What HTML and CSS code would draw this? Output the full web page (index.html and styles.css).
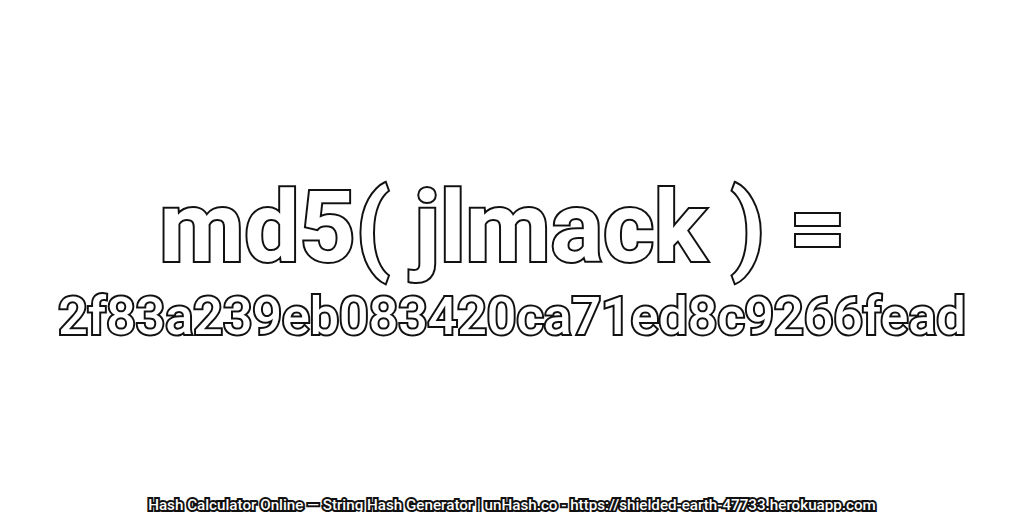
FILE: index.html
```html
<!DOCTYPE html>
<html lang="en">
<head>
    <meta charset="UTF-8">
    <title>md5( jlmack )</title>
    <link rel="stylesheet" href="styles.css">
</head>
<body>
    <div class="hash-card">
        <div class="hash-text">
            <h1 class="hash-title">md5( jlmack ) =</h1>
            <p class="hash-value">2f83a239eb083420ca71ed8c9266fead</p>
        </div>
        <p class="site-footer">Hash Calculator Online — String Hash Generator | unHash.co - https://shielded-earth-47733.herokuapp.com</p>
    </div>
</body>
</html>
```

FILE: styles.css
```css
body {
    margin: 0;
    background: #fff;
    font-family: Roboto, "Noto Sans", sans-serif;
}
.hash-card {
    width: 1024px;
    height: 512px;
    display: flex;
    flex-direction: column;
    align-items: center;
    overflow: hidden;
}
.hash-text {
    flex: 1;
    display: flex;
    flex-direction: column;
    align-items: center;
    justify-content: flex-end;
    padding-bottom: 150px;
}
.hash-title,
.hash-value,
.site-footer {
    margin: 0;
    color: #fff;
    font-weight: 500;
    white-space: nowrap;
    paint-order: stroke fill;
    -webkit-text-stroke: 4px #111;
}
.hash-title {
    margin-bottom: 10px;
    padding-right: 19px;
    font-size: 98px;
    font-weight: 700;
    line-height: 96px;
}
.hash-value {
    font-size: 52px;
    line-height: 62px;
}
.site-footer {
    font-size: 15.2px;
    line-height: 14px;
}
```
